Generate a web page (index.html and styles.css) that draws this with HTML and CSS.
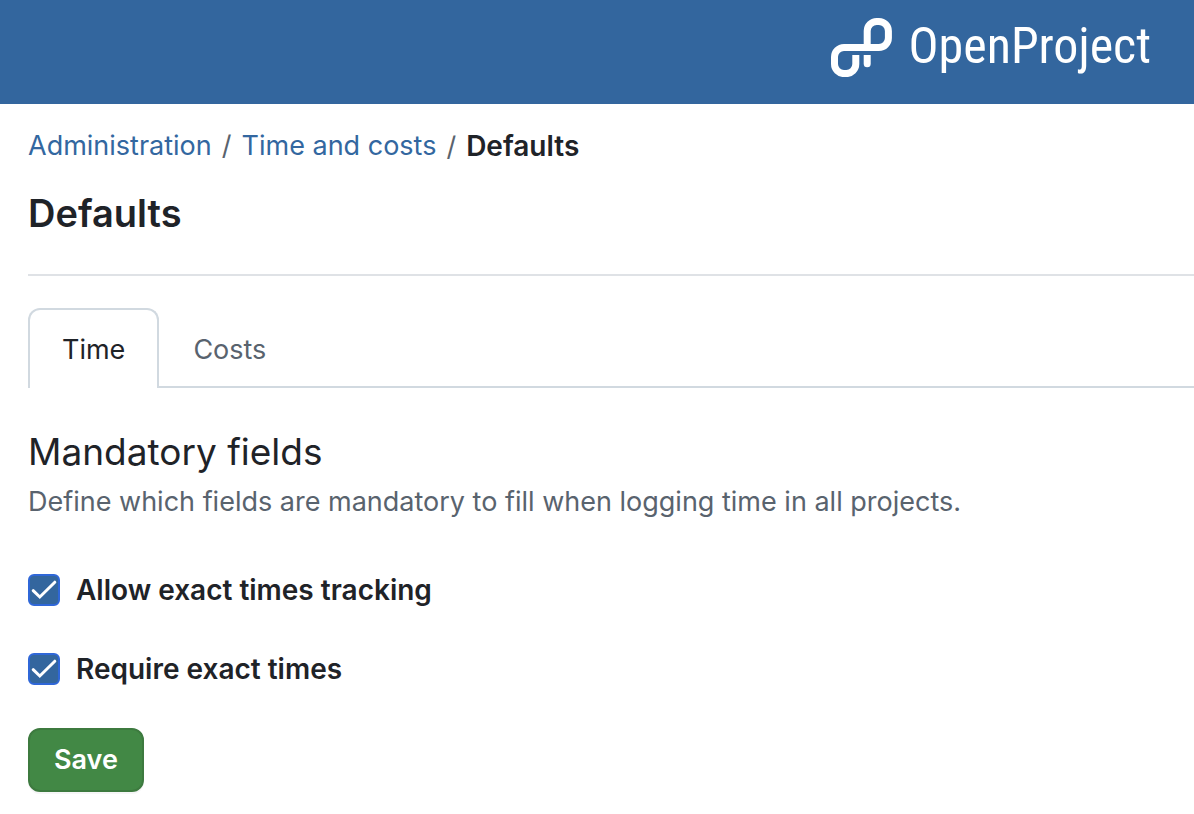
FILE: index.html
```html
<!DOCTYPE html>
<html lang="en">

<head>
    <meta charset="UTF-8">
    <meta name="viewport" content="width=device-width, initial-scale=1.0">
    <title>Defaults | OpenProject</title>
    <link rel="stylesheet" href="styles.css">
</head>

<body>

    <header class="top-bar">
        <a class="logo" href="#">
            <svg class="logo-mark" viewBox="0 0 61 59" fill="none" stroke="#fff" stroke-width="7" aria-hidden="true">
                <path d="M24.8 37V46.1A9.5 9.5 0 0 1 15.3 55.6H13A9.5 9.5 0 0 1 3.5 46.1V39A9.5 9.5 0 0 1 13 29.5H47.9A9.5 9.5 0 0 0 57.4 20V13A9.5 9.5 0 0 0 47.9 3.5H45.7A9.5 9.5 0 0 0 36.2 13V29.5" />
                <path d="M32.7 37H39.7V45.7A3.5 3.5 0 0 1 32.7 45.7Z" fill="#fff" stroke="none" />
            </svg>
            <span class="logo-text">OpenProject</span>
        </a>
    </header>

    <main class="content">
        <nav aria-label="Breadcrumb">
            <ol class="breadcrumb">
                <li><a href="#">Administration</a></li>
                <li><a href="#">Time and costs</a></li>
                <li aria-current="page">Defaults</li>
            </ol>
        </nav>

        <h1 class="page-title">Defaults</h1>

        <nav class="tabs" aria-label="Defaults">
            <a class="tab tab-selected" href="#" aria-current="page">Time</a>
            <a class="tab" href="#">Costs</a>
        </nav>

        <h2 class="section-title">Mandatory fields</h2>
        <p class="section-text">Define which fields are mandatory to fill when logging time in all projects.</p>

        <form class="settings-form">
            <div class="check-row">
                <input type="checkbox" id="allowExact" checked>
                <label for="allowExact">Allow exact times tracking</label>
            </div>
            <div class="check-row">
                <input type="checkbox" id="requireExact" checked>
                <label for="requireExact">Require exact times</label>
            </div>
            <button class="save-button" type="button">Save</button>
        </form>
    </main>

</body>

</html>
```
FILE: styles.css
```css
* {
    margin: 0;
    padding: 0;
    box-sizing: border-box;
}

body {
    font-family: Inter, "Liberation Sans", sans-serif;
    font-size: 27px;
    line-height: 40px;
    color: #1f2328;
    background: #fff;
}

a {
    color: #3367a0;
    text-decoration: none;
}

.top-bar {
    display: flex;
    justify-content: flex-end;
    height: 104px;
    padding: 0 43px;
    background: #33669e;
}

.logo {
    display: flex;
    align-items: center;
    gap: 17px;
    height: 95px;
    color: #fff;
}

.logo-mark {
    width: 61px;
    height: 59px;
}

.logo-text {
    padding-bottom: 4px;
    font-family: "Liberation Sans Narrow", "Roboto Condensed", "Liberation Sans", sans-serif;
    font-size: 50px;
    line-height: 60px;
}

.content {
    padding: 22px 0 22px 28px;
}

.breadcrumb {
    display: flex;
    list-style: none;
}

.breadcrumb li + li::before {
    content: "/";
    margin: 0 10px;
    color: #59636e;
    font-size: 27px;
    font-weight: 400;
}

.breadcrumb li[aria-current] {
    font-size: 28px;
    font-weight: 600;
}

.page-title {
    margin-bottom: 32px;
    padding: 16px 0 31px;
    border-bottom: 2px solid #dfe2e6;
    font-size: 38px;
    font-weight: 600;
    line-height: 60px;
}

.tabs {
    display: flex;
    border-bottom: 2px solid #d1d9e0;
}

.tab {
    height: 78px;
    padding: 20px 32px;
    border: 2px solid transparent;
    border-bottom: none;
    color: #59636e;
}

.tab-selected {
    height: 80px;
    margin-bottom: -2px;
    border-color: #d1d9e0;
    border-radius: 12px 12px 0 0;
    background: #fff;
    color: #1f2328;
}

.section-title {
    margin-top: 34px;
    font-size: 37px;
    font-weight: 400;
    line-height: 60px;
}

.section-text {
    color: #59636e;
}

.settings-form {
    display: flex;
    flex-direction: column;
    align-items: flex-start;
    gap: 39px;
    margin-top: 48px;
}

.check-row {
    display: flex;
    align-items: center;
    gap: 16px;
    font-size: 28px;
    font-weight: 600;
}

.check-row input {
    width: 32px;
    height: 32px;
    appearance: none;
    border: 2px solid #2f67d8;
    border-radius: 6px;
    background: #fff;
}

.check-row input:checked {
    background: #33669e url("data:image/svg+xml,%3Csvg xmlns='http://www.w3.org/2000/svg' viewBox='0 0 28 28'%3E%3Cpath d='M3.2 14.7L9.8 21L24.8 6.2' fill='none' stroke='white' stroke-width='3' stroke-linecap='round'/%3E%3C/svg%3E") center / 28px 28px no-repeat;
}

.save-button {
    height: 64px;
    padding: 0 24px;
    border: 2px solid #3d7a3f;
    border-radius: 12px;
    background: #428845;
    box-shadow: 0 2px 0 rgba(31, 35, 40, 0.04);
    color: #fff;
    font: inherit;
    font-weight: 600;
    cursor: pointer;
}
```
